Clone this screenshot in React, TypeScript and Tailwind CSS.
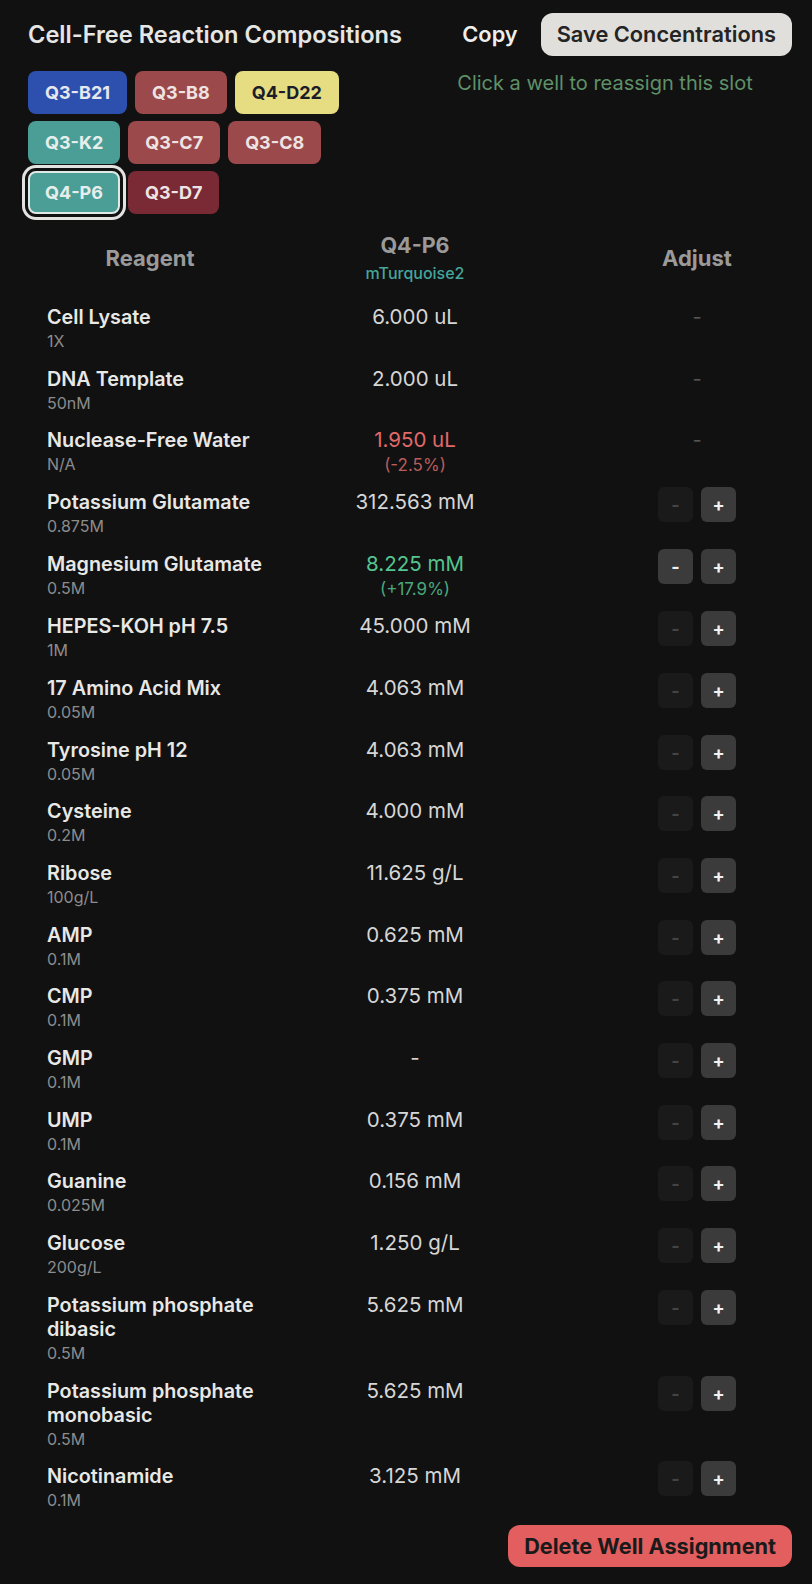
import React from "react";

type Row = {
  name: string;
  sub: string;
  value: string;
  pct?: string;
  tone?: "red" | "green";
  adjust: "none" | "plus" | "both";
};

const rows: Row[] = [
  { name: "Cell Lysate", sub: "1X", value: "6.000 uL", adjust: "none" },
  { name: "DNA Template", sub: "50nM", value: "2.000 uL", adjust: "none" },
  { name: "Nuclease-Free Water", sub: "N/A", value: "1.950 uL", pct: "(-2.5%)", tone: "red", adjust: "none" },
  { name: "Potassium Glutamate", sub: "0.875M", value: "312.563 mM", adjust: "plus" },
  { name: "Magnesium Glutamate", sub: "0.5M", value: "8.225 mM", pct: "(+17.9%)", tone: "green", adjust: "both" },
  { name: "HEPES-KOH pH 7.5", sub: "1M", value: "45.000 mM", adjust: "plus" },
  { name: "17 Amino Acid Mix", sub: "0.05M", value: "4.063 mM", adjust: "plus" },
  { name: "Tyrosine pH 12", sub: "0.05M", value: "4.063 mM", adjust: "plus" },
  { name: "Cysteine", sub: "0.2M", value: "4.000 mM", adjust: "plus" },
  { name: "Ribose", sub: "100g/L", value: "11.625 g/L", adjust: "plus" },
  { name: "AMP", sub: "0.1M", value: "0.625 mM", adjust: "plus" },
  { name: "CMP", sub: "0.1M", value: "0.375 mM", adjust: "plus" },
  { name: "GMP", sub: "0.1M", value: "-", adjust: "plus" },
  { name: "UMP", sub: "0.1M", value: "0.375 mM", adjust: "plus" },
  { name: "Guanine", sub: "0.025M", value: "0.156 mM", adjust: "plus" },
  { name: "Glucose", sub: "200g/L", value: "1.250 g/L", adjust: "plus" },
  { name: "Potassium phosphate dibasic", sub: "0.5M", value: "5.625 mM", adjust: "plus" },
  { name: "Potassium phosphate monobasic", sub: "0.5M", value: "5.625 mM", adjust: "plus" },
  { name: "Nicotinamide", sub: "0.1M", value: "3.125 mM", adjust: "plus" },
];

const chips: { label: string; cls: string; selected?: boolean }[] = [
  { label: "Q3-B21", cls: "bg-[#2d4fae] text-[#e6e8ee]" },
  { label: "Q3-B8", cls: "bg-[#9b494b] text-[#eee4e4]" },
  { label: "Q4-D22", cls: "bg-[#e6dc82] text-[#1c1c28]" },
  { label: "Q3-K2", cls: "bg-[#4b9e96] text-[#e6eeec]" },
  { label: "Q3-C7", cls: "bg-[#9b494b] text-[#eee4e4]" },
  { label: "Q3-C8", cls: "bg-[#9b494b] text-[#eee4e4]" },
  { label: "Q4-P6", cls: "bg-[#4b9e96] text-[#e6eeec]", selected: true },
  { label: "Q3-D7", cls: "bg-[#7a2a35] text-[#eee4e4]" },
];

function Value({ r }: { r: Row }) {
  const main =
    r.tone === "red" ? "text-[#e06a6a]" : r.tone === "green" ? "text-[#55c490]" : "text-[#d6d6d6]";
  const sub = r.tone === "red" ? "text-[#b85c5c]" : "text-[#4aa87c]";
  return (
    <div className="flex flex-col items-center">
      <div className={`text-[20.5px] leading-[24px] ${main}`}>{r.value}</div>
      {r.pct && <div className={`mt-[3px] text-[17px] leading-[20px] ${sub}`}>{r.pct}</div>}
    </div>
  );
}

function Adjust({ r }: { r: Row }) {
  if (r.adjust === "none") {
    return <div className="text-[20px] leading-[24px] text-[#555555]">-</div>;
  }
  return (
    <div className="-mt-[3px] flex gap-2">
      {r.adjust === "both" ? (
        <div className="flex h-[35px] w-[35px] items-center justify-center rounded-md bg-[#3b3b3b] text-[18px] font-bold text-[#f2f2f2]">
          -
        </div>
      ) : (
        <div className="flex h-[35px] w-[35px] items-center justify-center rounded-md bg-[#1a1a1a] text-[18px] font-bold text-[#444444]">
          -
        </div>
      )}
      <div className="flex h-[35px] w-[35px] items-center justify-center rounded-md bg-[#3b3b3b] text-[18px] font-bold text-[#f2f2f2]">
        +
      </div>
    </div>
  );
}

export default function App() {
  return (
    <div className="min-h-screen bg-[#111111] pb-[18px] pl-[28px] pr-[20px] font-['Inter',sans-serif] text-[#e8e8e8]">
      <div className="flex items-center justify-between pt-[13px]">
        <h1 className="text-[23.6px] font-semibold leading-[43px] text-[#e6e6e4]">
          Cell-Free Reaction Compositions
        </h1>
        <div className="flex items-center gap-[23px]">
          <span className="text-[21.8px] font-semibold text-[#eeeeec]">Copy</span>
          <button className="h-[43px] rounded-xl bg-[#e0dfdc] px-4 text-[21.8px] font-semibold text-[#242424]">
            Save Concentrations
          </button>
        </div>
      </div>

      <div className="mt-[15px] flex gap-4">
        <div className="flex w-[374px] flex-wrap gap-x-2 gap-y-[7px]">
          {chips.map((c) => (
            <div
              key={c.label}
              className={`flex h-[43px] items-center rounded-lg text-[18px] font-bold ${c.cls} ${
                c.selected
                  ? "border-2 border-[#dfe9e6] px-[15px] ring-3 ring-[#e2e2e0] ring-offset-3 ring-offset-[#111111]"
                  : "px-[17px]"
              }`}
            >
              {c.label}
            </div>
          ))}
        </div>
        <div className="flex-1 text-center text-[20px] leading-[24px] text-[#5f9068]">
          Click a well to reassign this slot
        </div>
      </div>

      <div className="mt-[12px]">
        <div className="grid grid-cols-[244px_286px_234px] items-center pt-[6px] pb-[14px]">
          <div className="pt-[2px] text-center text-[22px] font-bold text-[#9a9a9a]">Reagent</div>
          <div className="flex flex-col items-center">
            <div className="text-[21.5px] font-bold leading-[26px] text-[#9a9a9a]">Q4-P6</div>
            <div className="mt-[6px] text-[16px] font-medium leading-[18px] text-[#45a59b]">mTurquoise2</div>
          </div>
          <div className="pl-[44px] pt-[2px] text-center text-[22px] font-bold text-[#9a9a9a]">Adjust</div>
        </div>

        {rows.map((r) => (
          <div key={r.name} className="grid grid-cols-[244px_286px_234px] items-start pt-[9px] pb-[6px]">
            <div className="pl-[19px]">
              <div className="text-[19.8px] font-semibold leading-[24px] text-[#e8e8e6]">{r.name}</div>
              <div className="mt-[3px] text-[16px] leading-[19.7px] text-[#8c8c8c]">{r.sub}</div>
            </div>
            <Value r={r} />
            <div className="flex justify-center pl-[44px]">
              <Adjust r={r} />
            </div>
          </div>
        ))}
      </div>

      <div className="mt-[8px] flex justify-end">
        <button className="h-[42px] rounded-xl bg-[#e35e5e] px-4 text-[21.7px] font-bold text-[#1a1a1a]">
          Delete Well Assignment
        </button>
      </div>
    </div>
  );
}
